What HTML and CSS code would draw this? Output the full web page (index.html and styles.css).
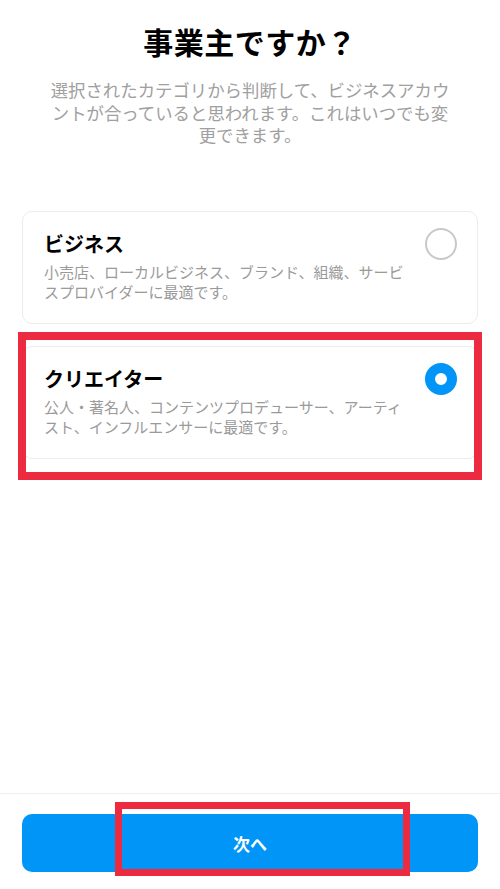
FILE: index.html
```html
<!DOCTYPE html>
<html lang="ja">
<head>
<meta charset="utf-8">
<title>事業主ですか？</title>
<link rel="stylesheet" href="styles.css">
</head>
<body>
<div class="screen">
  <header class="intro">
    <h1 class="intro-title">事業主ですか？</h1>
    <p class="intro-text">選択されたカテゴリから判断して、ビジネスアカウントが合っていると思われます。これはいつでも変更できます。</p>
  </header>

  <div class="options">
    <label class="option">
      <div class="option-head">
        <span class="option-title">ビジネス</span>
        <input class="radio" type="radio" name="account" value="business">
      </div>
      <p class="option-desc">小売店、ローカルビジネス、ブランド、組織、サービスプロバイダーに最適です。</p>
    </label>
    <label class="option">
      <div class="option-head">
        <span class="option-title">クリエイター</span>
        <input class="radio" type="radio" name="account" value="creator" checked>
      </div>
      <p class="option-desc">公人・著名人、コンテンツプロデューサー、アーティスト、インフルエンサーに最適です。</p>
    </label>
  </div>

  <footer class="actions">
    <button class="next" type="button">次へ</button>
  </footer>

  <div class="mark mark-option"></div>
  <div class="mark mark-next"></div>
</div>
</body>
</html>
```

FILE: styles.css
```css
* {
  box-sizing: border-box;
}

html, body {
  margin: 0;
  padding: 0;
  background: #ffffff;
}

body {
  font-family: "Noto Sans CJK JP", "Noto Sans", sans-serif;
  color: #000;
}

.screen {
  position: relative;
  height: 889px;
  display: flex;
  flex-direction: column;
}

/* heading block */
.intro {
  padding-top: 23px;
  display: flex;
  flex-direction: column;
  align-items: center;
}

.intro-title {
  margin: 0;
  font-size: 30px;
  line-height: 36px;
  font-weight: 700;
  letter-spacing: 0.5px;
}

.intro-text {
  margin: 20px 0 0;
  width: 412px;
  font-size: 17.4px;
  line-height: 22.5px;
  color: #a0a0a0;
  text-align: center;
}

/* account type cards */
.options {
  margin-top: 64px;
  padding: 0 22px;
  display: flex;
  flex-direction: column;
  gap: 22px;
}

.option {
  display: block;
  border: 1px solid #ececec;
  border-radius: 10px;
  padding: 16px 20px 21px 21px;
  cursor: pointer;
}

.option-head {
  height: 32px;
  display: flex;
  align-items: center;
  justify-content: space-between;
}

.option-title {
  font-size: 20px;
  line-height: 28px;
  font-weight: 700;
}

.option-desc {
  margin: 2px 0 0;
  padding-right: 48px;
  font-size: 15px;
  line-height: 20px;
  color: #9a9a9a;
}

.radio {
  appearance: none;
  -webkit-appearance: none;
  margin: 0;
  width: 32px;
  height: 32px;
  border-radius: 50%;
  border: 2px solid #c8c8c8;
  background: #fff;
  flex: none;
}

.radio:checked {
  border: 10.5px solid #0095f6;
}

/* bottom action bar */
.actions {
  margin-top: auto;
  border-top: 1px solid #efefef;
  padding: 20px 22px 17px;
}

.next {
  display: block;
  width: 100%;
  height: 58px;
  border: none;
  border-radius: 10px;
  background: #0095f6;
  color: #fff;
  font-family: inherit;
  font-size: 17px;
  font-weight: 700;
}

/* highlight frames */
.mark {
  position: absolute;
  border: 8px solid #ec2a40;
  pointer-events: none;
}

.mark-option {
  left: 18px;
  top: 332px;
  width: 464px;
  height: 148px;
}

.mark-next {
  left: 115px;
  top: 802px;
  width: 295px;
  height: 74px;
  border-width: 7px;
}
```
